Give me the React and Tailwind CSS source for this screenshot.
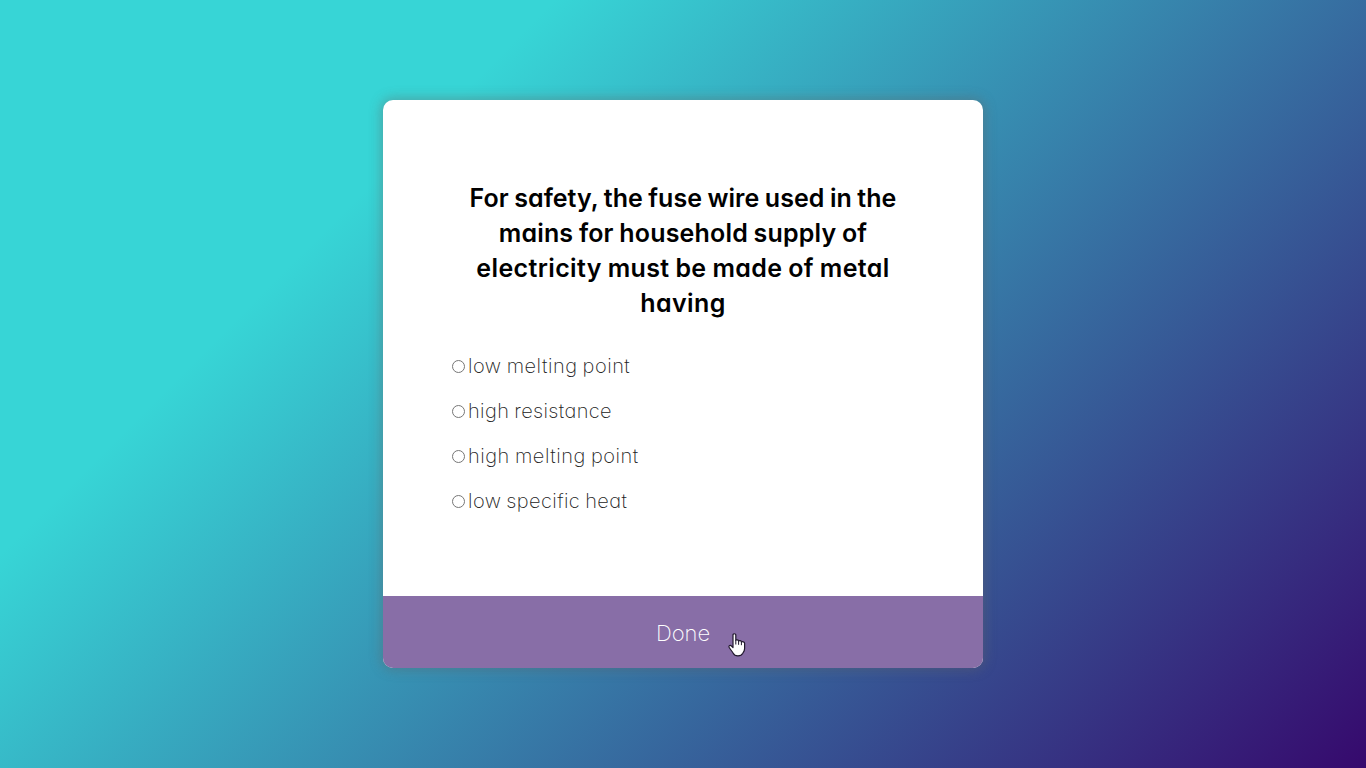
const question = [
  { text: "For safety, the fuse wire used in the", tracking: "tracking-[0.03px]" },
  { text: "mains for household supply of", tracking: "tracking-[0.17px]" },
  { text: "electricity must be made of metal", tracking: "tracking-[0.37px]" },
  { text: "having", tracking: "tracking-[0.4px]" },
];

const options = [
  { text: "low melting point", tracking: "tracking-[0.5px]" },
  { text: "high resistance", tracking: "tracking-[0.37px]" },
  { text: "high melting point", tracking: "tracking-[0.51px]" },
  { text: "low specific heat", tracking: "tracking-[0.4px]" },
];

function HandCursor() {
  return (
    <svg className="absolute left-[344px] top-[36px] h-[25px] w-[20px]" viewBox="0 0 20 25">
      <path
        d="M6 2.8C6 1.4 8.8 1.4 8.8 2.8V8.2C9.4 7.5 11.4 7.7 11.6 9C12.4 8.3 14.2 8.6 14.4 9.9C15.4 9.3 17.6 9.9 17.6 11.2V16.5C17.6 19 16.4 20 15.8 21.3C14 24.8 7.8 24.8 6.2 21.3C5 19 3.2 17.4 2.1 15.2C1.4 13.6 3.3 12.6 4.5 14L6 15.6Z"
        fill="#fff"
        stroke="#20182c"
        strokeWidth="1.2"
        strokeLinejoin="round"
      />
      <path d="M8.8 8V12.5M11.6 9V12.8M14.4 10V13.2" stroke="#20182c" strokeWidth="1" fill="none" />
    </svg>
  );
}

export default function App() {
  return (
    <main className="flex h-screen items-center justify-center overflow-hidden bg-[linear-gradient(315deg,#36096d_0%,#37d5d6_74%)] font-['Inter',sans-serif] [font-feature-settings:'cv11']">
      <section className="w-[600px] overflow-hidden rounded-[10px] bg-white shadow-[0_0_12px_2px_rgba(100,100,100,0.42)]">
        <div className="h-[496px] px-16 pt-[81px]">
          <h2 className="text-center text-[25px] leading-[35px] font-semibold text-black [word-spacing:-0.8px]">
            {question.map((line) => (
              <span key={line.text} className={`block whitespace-nowrap ${line.tracking}`}>
                {line.text}
              </span>
            ))}
          </h2>
          <ul className="mt-[30px] flex flex-col gap-[15px] pl-[5px] text-[20px] leading-[30px] font-extralight text-[#222] [word-spacing:-1px]">
            {options.map((option) => (
              <li key={option.text}>
                <label className="flex items-center gap-[3px]">
                  <input type="radio" name="answer" className="size-[13px]" />
                  <span className={`whitespace-nowrap pt-px leading-[29px] ${option.tracking}`}>{option.text}</span>
                </label>
              </li>
            ))}
          </ul>
        </div>
        <button className="relative block h-[72px] w-full bg-[#886ea7] pt-0.5 text-[22px] font-extralight text-white">
          Done
          <HandCursor />
        </button>
      </section>
    </main>
  );
}
